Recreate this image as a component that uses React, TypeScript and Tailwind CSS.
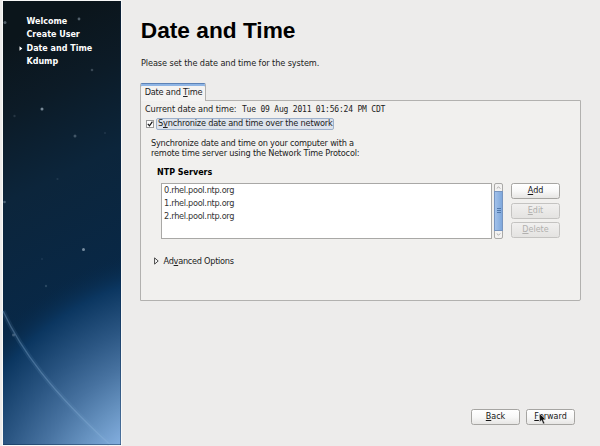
import type { ReactNode } from "react";

const stars: [number, number, number, number][] = [
  [79, 19, 1.4, 0.4], [5, 22.5, 1.5, 0.4], [92, 70, 1.3, 0.25], [42, 109, 1.5, 0.6],
  [14.5, 116, 1.2, 0.15], [75, 136, 1.5, 0.3], [105, 133, 1, 0.12], [57.5, 179, 1.1, 0.12],
  [4.5, 202, 1.3, 0.35], [83.5, 249.5, 1.5, 0.6], [42, 259, 1, 0.1], [46, 286, 1.2, 0.18], [13.5, 335, 1.6, 0.25],
];

function Sidebar() {
  const items = ["Welcome", "Create User", "Date and Time", "Kdump"];
  return (
    <aside className="relative h-[446px] w-[122px] shrink-0">
      <svg className="absolute top-0 left-0" width="122" height="446" viewBox="0 0 122 446">
        <defs>
          <linearGradient id="sky" gradientUnits="userSpaceOnUse" x1="10" y1="40" x2="125" y2="275">
            <stop offset="0" stopColor="#0b151b" />
            <stop offset="0.25" stopColor="#0c1b27" />
            <stop offset="0.55" stopColor="#0c253b" />
            <stop offset="1" stopColor="#082847" />
          </linearGradient>
          <radialGradient id="glow" gradientUnits="userSpaceOnUse" cx="210" cy="535" r="300">
            <stop offset="0.42" stopColor="#84afe0" />
            <stop offset="0.52" stopColor="#6793c1" />
            <stop offset="0.63" stopColor="#4772a0" />
            <stop offset="0.74" stopColor="#2b5683" />
            <stop offset="0.88" stopColor="#0b3660" />
            <stop offset="0.98" stopColor="#082847" stopOpacity="0" />
          </radialGradient>
        </defs>
        <rect x="2" y="0" width="120" height="446" fill="#f8f8f7" />
        <rect x="3" y="1" width="118" height="444" fill="url(#sky)" />
        <rect x="3" y="1" width="118" height="444" fill="url(#glow)" />
        <path d="M3 311C21 350 51 391 110 444.5" fill="none" stroke="#82add8" strokeOpacity="0.1" strokeWidth="5" />
        <path d="M3 311C21 350 51 391 110 444.5" fill="none" stroke="#92b7dc" strokeOpacity="0.32" strokeWidth="1.4" />
        {stars.map(([x, y, r, o]) => (
          <circle key={`${x}-${y}`} cx={x} cy={y} r={r} fill="#bfd0df" fillOpacity={o} />
        ))}
        <path d="M120.5 1V445M3 444.5H121" stroke="#0a2b50" strokeOpacity="0.45" />
      </svg>
      <nav className="relative flex flex-col pt-[15px] text-[8px] leading-[13.4px] font-bold text-white">
        {items.map((item) => (
          <div key={item} className="flex items-center pl-[18.5px]">
            <span className="flex w-2 shrink-0">
              {item === "Date and Time" && (
                <svg width="4" height="5" viewBox="0 0 4 5"><path d="M.5 .2L3.3 2.5L.5 4.8Z" fill="white" /></svg>
              )}
            </span>
            <span className="whitespace-nowrap">{item}</span>
          </div>
        ))}
      </nav>
    </aside>
  );
}

function Mnemonic({ children }: { children: ReactNode }) {
  return <span className="underline decoration-1 underline-offset-[1px]">{children}</span>;
}

function Button({ children, disabled }: { children: ReactNode; disabled?: boolean }) {
  return (
    <button
      disabled={disabled}
      className={`flex h-[16px] w-[49px] items-center justify-center rounded-[2.5px] border text-[8px] leading-none ${
        disabled
          ? "border-[#c4c3c1] bg-linear-to-b from-[#f1f0ef] to-[#e4e3e1] text-[#b1b0ae]"
          : "border-[#a6a5a2] bg-linear-to-b from-white via-[#f8f8f8] to-[#e7e6e4] text-[#151515]"
      }`}
    >
      {children}
    </button>
  );
}

function ScrollBar() {
  return (
    <div className="flex h-[56px] w-[9px] flex-col rounded-[2px] border border-[#aaa9a7] bg-[#f3f2f1]">
      <div className="flex h-[7px] items-center justify-center">
        <svg width="5" height="3" viewBox="0 0 5 3"><path d="M.7 2.6L2.5 .8L4.3 2.6" fill="none" stroke="#aaa" /></svg>
      </div>
      <div className="-mx-px flex h-[40px] flex-col items-center justify-center gap-px border border-[#7795c0] bg-linear-to-r from-[#a2c1ea] to-[#7fa8dc]">
        <i className="h-px w-[4px] bg-[#5279ad]" />
        <i className="h-px w-[4px] bg-[#5279ad]" />
        <i className="h-px w-[4px] bg-[#5279ad]" />
      </div>
      <div className="flex h-[7px] items-center justify-center">
        <svg width="5" height="3" viewBox="0 0 5 3"><path d="M.7 .4L2.5 2.2L4.3 .4" fill="none" stroke="#aaa" /></svg>
      </div>
    </div>
  );
}

export default function App() {
  return (
    <div className="flex h-[446px] w-[600px] overflow-hidden bg-[#edeceb] font-['DejaVu_Sans',sans-serif] text-[8.2px] whitespace-nowrap text-[#222]">
      <Sidebar />
      <main className="flex flex-1 flex-col pt-[16px] pl-[18px]">
        <h1 className="ml-[0.8px] font-['Liberation_Sans',sans-serif] text-[22.7px] leading-[28px] font-bold text-black">Date and Time</h1>
        <p className="mt-[13px] mb-[14px] ml-[1px] leading-[12px] tracking-[-0.1px]">Please set the date and time for the system.</p>
        <div className="relative z-10 -mb-px flex h-[18px] w-[66px] justify-center rounded-t-[2px] border border-b-0 border-[#b2b1af] border-t-[#5d82b6] bg-[#f4f3f2] shadow-[inset_0_2px_0_#8fb5e5]">
          <span className="pt-[2px] pl-[1px] leading-[12px] tracking-[-0.2px]">Date and <Mnemonic>T</Mnemonic>ime</span>
        </div>
        <section className="flex h-[201px] w-[441px] flex-col rounded-br-[2px] border border-[#b2b1af] bg-[#f1f0ee] pt-[2px] pl-[4px]">
          <div className="flex leading-[12px]">
            <span className="w-[97px] tracking-[-0.1px]">Current date and time:</span>
            <span className="pt-px font-['DejaVu_Sans_Mono',monospace] text-[8px] tracking-[-0.2px]">Tue 09 Aug 2011 01:56:24 PM CDT</span>
          </div>
          <div className="mt-[1.5px] flex h-[13px] items-center">
            <span className="ml-[1px] flex h-[8px] w-[8px] items-center justify-center border border-[#999] bg-white">
              <svg width="6" height="6" viewBox="0 0 6 6"><path d="M.8 2.8L2.5 4.8L5.4 .7" fill="none" stroke="#111" strokeWidth="1.2" /></svg>
            </span>
            <span className="ml-[2px] flex h-[12px] w-[178px] items-center rounded-[2px] border border-[#9db0ca] bg-[#dde3ec] pb-px pl-[1px] tracking-[-0.2px]">
              S<Mnemonic>y</Mnemonic>nchronize date and time over the network
            </span>
          </div>
          <p className="mt-[7px] ml-[6px] leading-[10px]">
            <span className="tracking-[-0.22px]">Synchronize date and time on your computer with a</span>
            <br />
            <span className="tracking-[-0.18px]">remote time server using the Network Time Protocol:</span>
          </p>
          <h2 className="mt-[9px] ml-[12px] text-[8px] leading-[12px] font-bold text-black">NTP Servers</h2>
          <div className="mt-[4px] ml-[16px] flex">
            <div className="h-[56px] w-[331px] border border-[#a9a8a6] bg-white leading-[13.3px] tracking-[-0.3px] text-[#333]">
              <div className="pl-[2px]">0.rhel.pool.ntp.org</div>
              <div className="pl-[2px]">1.rhel.pool.ntp.org</div>
              <div className="pl-[2px]">2.rhel.pool.ntp.org</div>
            </div>
            <div className="ml-[2px]"><ScrollBar /></div>
            <div className="ml-[8px] flex flex-col gap-[3.6px] pt-[0.5px]">
              <Button><Mnemonic>A</Mnemonic>dd</Button>
              <Button disabled><Mnemonic>E</Mnemonic>dit</Button>
              <Button disabled><Mnemonic>D</Mnemonic>elete</Button>
            </div>
          </div>
          <div className="mt-[16px] ml-[9px] flex items-center leading-[12px]">
            <svg width="5" height="8" viewBox="0 0 5 8"><path d="M.6 .9V7.1L4.2 4Z" fill="white" stroke="#333" strokeWidth=".9" /></svg>
            <span className="ml-[4.5px] tracking-[-0.28px]">Ad<Mnemonic>v</Mnemonic>anced Options</span>
          </div>
        </section>
        <div className="mt-[108px] ml-[331px] flex gap-[6px]">
          <Button><Mnemonic>B</Mnemonic>ack</Button>
          <div className="relative">
            <Button><Mnemonic>F</Mnemonic>orward</Button>
            <svg className="absolute top-[4px] left-[13px]" width="8" height="12" viewBox="0 0 8 12">
              <path d="M.6 .6V9L2.6 7.2L4.1 11L5.7 10.3L4.2 6.8H7Z" fill="#111" stroke="#eee" strokeWidth=".5" />
            </svg>
          </div>
        </div>
      </main>
    </div>
  );
}
